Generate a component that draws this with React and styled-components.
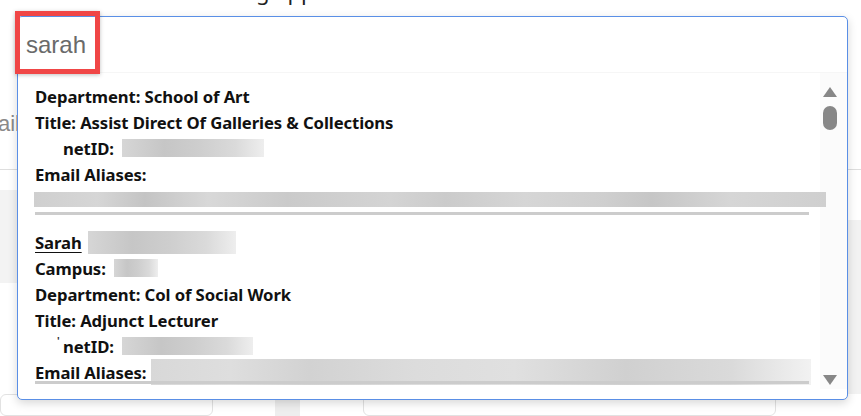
import React from "react";
import styled, { createGlobalStyle } from "styled-components";

const GlobalStyle = createGlobalStyle`
  html, body {
    margin: 0;
    padding: 0;
    background: #fff;
  }
  body {
    font-family: "Noto Sans", "Liberation Sans", sans-serif;
  }
`;

const people = [
  {
    id: 1,
    lines: [
      { label: "Department:", value: "School of Art" },
      { label: "Title:", value: "Assist Direct Of Galleries & Collections" },
      { label: "netID:", blur: 142, indent: true },
      { label: "Email Aliases:" },
    ],
    aliasBar: true,
  },
  {
    id: 2,
    name: "Sarah",
    nameBlur: 148,
    lines: [
      { label: "Campus:", blur: 44 },
      { label: "Department:", value: "Col of Social Work" },
      { label: "Title:", value: "Adjunct Lecturer" },
      { label: "netID:", blur: 131, indent: true, tick: true },
      { label: "Email Aliases:", blur: 660, wide: true },
    ],
  },
];

const App = () => {
  return (
    <>
      <GlobalStyle />
      <Page>
        <Backdrop>
          <PageTitle>Searching applicants</PageTitle>
          <SideLabel>Email</SideLabel>
          <Rule />
          <BodyRow>
            <LeftPanel />
            <Spacer />
            <RightPanel />
          </BodyRow>
          <CardRow>
            <Card $width={211} />
            <Gutter />
            <Card $width={411} />
          </CardRow>
        </Backdrop>

        <Dropdown>
          <SearchBox>
            <SearchText>sarah</SearchText>
          </SearchBox>
          <Highlight />
          <Results>
            <ResultList>
              {people.map((p, i) => (
                <Person key={p.id}>
                  {p.name && (
                    <Line>
                      <Name>{p.name}</Name>
                      <Blur $w={p.nameBlur} $h={23} $ml={6} />
                    </Line>
                  )}
                  {p.lines.map((l) => (
                    <Line key={l.label} $indent={l.indent}>
                      {l.tick && <Tick>'</Tick>}
                      {l.label}
                      {l.value && <> {l.value}</>}
                      {l.blur && (
                        <Blur
                          $w={l.blur}
                          $h={l.wide ? 26 : 18}
                          $ml={l.wide ? 5 : 8}
                          $fade={l.wide}
                        />
                      )}
                    </Line>
                  ))}
                  {p.aliasBar && <AliasBar />}
                  <Divider $last={i === people.length - 1} />
                </Person>
              ))}
            </ResultList>
            <Scrollbar>
              <Arrow $up />
              <Thumb />
              <Track />
              <Arrow />
            </Scrollbar>
          </Results>
        </Dropdown>
      </Page>
    </>
  );
};

export default App;

const Page = styled.div`
  position: relative;
  width: 861px;
  height: 416px;
  overflow: hidden;
  background: #fff;
`;

const Backdrop = styled.div`
  display: flex;
  flex-direction: column;
  height: 100%;
`;

const PageTitle = styled.h2`
  margin: -22px 0 0 167px;
  font-family: "Noto Sans", sans-serif;
  font-weight: 400;
  font-size: 22px;
  line-height: 26px;
  color: #222;
`;

const SideLabel = styled.div`
  margin: 108px 0 0 -35px;
  font-family: "Liberation Sans", Arial, sans-serif;
  font-size: 22px;
  color: #8a8a8a;
  line-height: 24px;
`;

const Rule = styled.div`
  margin-top: 33px;
  height: 1px;
  background: #dedede;
`;

const BodyRow = styled.div`
  display: flex;
  margin-top: 20px;
  height: 218px;
`;

const LeftPanel = styled.div`
  width: 30px;
  height: 93px;
  background: #f3f3f3;
`;

const Spacer = styled.div`
  flex: 1;
`;

const RightPanel = styled.div`
  width: 26px;
  margin-top: 30px;
  background: #f2f2f2;
`;

const CardRow = styled.div`
  display: flex;
  align-items: flex-start;
  flex: 1;
`;

const Card = styled.div`
  width: ${(p) => p.$width}px;
  height: 20px;
  border: 1px solid #e2e2e2;
  border-radius: 6px;
  background: #fff;
  &:last-child {
    margin-left: 63px;
  }
`;

const Gutter = styled.div`
  width: 25px;
  height: 30px;
  margin: -8px 0 0 62px;
  background: #eeeeee;
`;

const Dropdown = styled.div`
  position: absolute;
  left: 17px;
  top: 16px;
  width: 829px;
  height: 382px;
  border: 1px solid #5a8fe6;
  border-radius: 5px;
  background: #fff;
  box-shadow: 0 3px 10px rgba(0, 0, 0, 0.16);
  display: flex;
  flex-direction: column;
`;

const SearchBox = styled.div`
  height: 55px;
  display: flex;
  align-items: center;
  padding-left: 8px;
  border-bottom: 1px solid #f6f6f6;
`;

const SearchText = styled.span`
  font-family: "Liberation Sans", Arial, sans-serif;
  font-size: 24px;
  color: #6a6a6a;
  margin-top: 1px;
`;

const Highlight = styled.div`
  position: absolute;
  left: -3px;
  top: -6px;
  width: 75px;
  height: 53px;
  border: 5px solid #f04646;
  box-shadow: 0 1px 4px rgba(0, 0, 0, 0.25);
`;

const Results = styled.div`
  height: 316px;
  display: flex;
  overflow: hidden;
`;

const ResultList = styled.div`
  flex: 1;
  min-width: 0;
  padding: 10px 0 0 17px;
`;

const Person = styled.div`
  display: flex;
  flex-direction: column;
`;

const Line = styled.div`
  display: flex;
  align-items: center;
  height: 26px;
  padding-left: ${(p) => (p.$indent ? 28 : 0)}px;
  font-family: "Noto Sans", "Liberation Sans", sans-serif;
  font-weight: 700;
  font-size: 16.7px;
  letter-spacing: -0.1px;
  color: #111;
  white-space: pre;
`;

const Tick = styled.span`
  position: absolute;
  margin-left: -6px;
  margin-top: -10px;
  font-size: 10px;
  color: #333;
`;

const Name = styled.span`
  text-decoration: underline;
  text-underline-offset: 3px;
`;

const Blur = styled.span`
  display: inline-block;
  flex-shrink: 0;
  width: ${(p) => p.$w}px;
  height: ${(p) => p.$h}px;
  margin-left: ${(p) => p.$ml}px;
  background: ${(p) =>
    p.$fade
      ? "linear-gradient(90deg, #d8d8d8 0%, #dedede 12%, #d2d2d2 24%, #dcdcdc 40%, #e0e0e0 55%, #d0d0d0 72%, #dadada 88%, #f2f2f2 100%)"
      : "linear-gradient(90deg, #d6d6d6 0%, #c6c6c6 30%, #cecece 55%, #dadada 80%, #eeeeee 100%)"};
`;

const AliasBar = styled.div`
  width: 792px;
  flex-shrink: 0;
  height: 15px;
  margin: 5px 0 0 -1px;
  background: linear-gradient(
    90deg,
    #cfcfcf 0%,
    #d6d6d6 8%,
    #c4c4c4 14%,
    #d8d8d8 22%,
    #cacaca 32%,
    #d4d4d4 45%,
    #cbcbcb 52%,
    #d6d6d6 62%,
    #cfcfcf 72%,
    #c6c6c6 78%,
    #d6d6d6 88%,
    #cfcfcf 100%
  );
  position: relative;
  z-index: 1;
`;

const Divider = styled.div`
  width: 774px;
  height: 3px;
  margin: ${(p) => (p.$last ? "-4px 0 0" : "5px 0 14px")};
  background: #cccccc;
`;

const Scrollbar = styled.div`
  width: 27px;
  flex-shrink: 0;
  display: flex;
  flex-direction: column;
  align-items: center;
  padding: 14px 7px 4px 0;
  box-sizing: border-box;
  background: #fbfbfb;
`;

const Arrow = styled.div`
  width: 0;
  height: 0;
  border-left: 7px solid transparent;
  border-right: 7px solid transparent;
  ${(p) =>
    p.$up
      ? "border-bottom: 10px solid #878787;"
      : "border-top: 10px solid #878787;"}
`;

const Thumb = styled.div`
  width: 14px;
  height: 24px;
  margin-top: 9px;
  border-radius: 7px;
  background: #878787;
`;

const Track = styled.div`
  flex: 1;
`;
